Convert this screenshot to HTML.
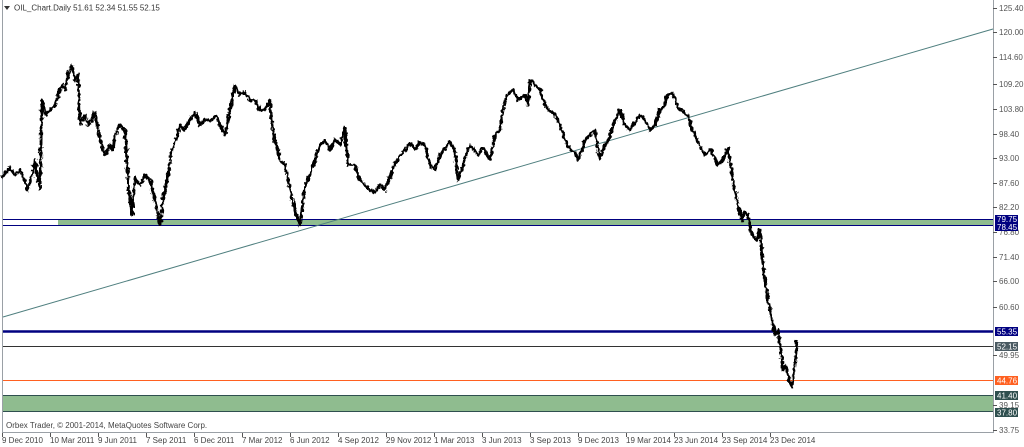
<!DOCTYPE html>
<html><head><meta charset="utf-8"><style>
html,body{margin:0;padding:0;background:#fff;}
svg{display:block;font-family:"Liberation Sans",sans-serif;}
</style></head><body>
<svg width="1024" height="447" viewBox="0 0 1024 447" xmlns="http://www.w3.org/2000/svg">
<defs>
<filter id="j" x="-5%" y="-5%" width="110%" height="110%">
<feTurbulence type="fractalNoise" baseFrequency="0.35 0.25" numOctaves="2" seed="3"/>
<feDisplacementMap in="SourceGraphic" scale="5" xChannelSelector="R" yChannelSelector="G"/>
</filter>
</defs>
<rect x="0" y="0" width="1024" height="447" fill="#fff"/>
<line x1="2.5" y1="0" x2="2.5" y2="433" stroke="#9aa0a6"/>
<line x1="993.5" y1="0" x2="993.5" y2="433" stroke="#9aa0a6"/>
<line x1="2" y1="432.5" x2="994" y2="432.5" stroke="#9aa0a6"/>
<rect x="58" y="219" width="935" height="7" fill="#8fbc8f"/>
<line x1="3" y1="219.5" x2="993" y2="219.5" stroke="#000080"/>
<line x1="3" y1="225.5" x2="993" y2="225.5" stroke="#000080"/>
<rect x="3" y="395" width="990" height="17" fill="#8fbc8f"/>
<line x1="3" y1="395.5" x2="993" y2="395.5" stroke="#2f4f4f"/>
<line x1="3" y1="411.5" x2="993" y2="411.5" stroke="#2f4f4f"/>
<line x1="3" y1="331.5" x2="993" y2="331.5" stroke="#000080" stroke-width="2.5"/>
<line x1="3" y1="346.5" x2="993" y2="346.5" stroke="#333"/>
<line x1="3" y1="380.5" x2="993" y2="380.5" stroke="#ff6020"/>
<line x1="3" y1="317" x2="993" y2="29" stroke="#4f7f7f" stroke-width="1"/>
<g filter="url(#j)">
<polyline fill="none" stroke="#000" stroke-width="2.8" stroke-linejoin="round" points="2,178 6,172 10,168 15,175 20,170 25,182 28,190 32,175 35,160 38,180 40,188 42,100 46,115 50,110 55,105 58,95 62,85 65,90 68,75 72,65 75,80 78,75 80,125 85,115 88,125 92,120 95,112 100,140 105,155 110,145 113,150 115,135 120,125 125,130 128,180 132,215 135,178 140,185 145,175 150,180 155,200 158,215 160,225 163,200 168,175 172,150 176,140 180,125 185,130 190,120 195,112 200,125 205,120 212,120 216,115 220,125 225,135 230,110 235,85 240,95 245,92 250,100 255,100 260,110 265,110 270,100 272,125 275,140 280,160 285,165 290,190 296,215 300,225 305,185 310,175 315,160 320,145 325,140 330,150 335,140 340,145 345,128 348,165 355,165 360,180 365,185 370,190 375,192 380,185 385,190 393,168 400,155 405,150 410,143 415,150 420,142 425,145 430,165 435,170 440,155 445,148 450,142 455,152 458,180 462,168 466,155 470,145 474,150 478,155 483,148 490,160 495,135 500,130 503,110 507,95 513,90 518,100 525,95 528,105 530,80 535,85 540,90 543,100 548,110 552,112 555,115 560,125 565,140 570,150 575,152 578,160 582,150 585,140 590,135 595,130 597,145 600,160 603,150 608,140 612,130 615,120 620,110 625,125 630,130 635,122 640,115 645,120 650,130 655,125 660,110 665,105 667,95 672,93 675,98 678,108 683,112 688,115 692,130 697,140 701,148 705,155 710,150 712,152 718,165 723,160 728,148 732,175 737,200 742,220 745,212 748,215 752,235 757,240 760,230 764,275 768,300 772,320 775,335 778,330 780,345 783,370 786,365 789,380 792,386 794,372 795,365 797,340"/>
</g>
<path d="M4 6 L10 6 L7 10 Z" fill="#333"/>
<text x="14" y="10.5" font-size="8" fill="#333">OIL_Chart.Daily  51.61 52.34 51.55 52.15</text>
<text x="6" y="428" font-size="8" fill="#444">Orbex Trader, © 2001-2014, MetaQuotes Software Corp.</text>
<g font-size="8" fill="#555">
<text x="999" y="11">125.40</text>
<text x="999" y="35">120.00</text>
<text x="999" y="60">114.60</text>
<text x="999" y="87">109.20</text>
<text x="999" y="112">103.80</text>
<text x="999" y="137">98.40</text>
<text x="999" y="161">93.00</text>
<text x="999" y="186">87.60</text>
<text x="999" y="210">82.20</text>
<text x="999" y="235">76.80</text>
<text x="999" y="260">71.40</text>
<text x="999" y="284">66.00</text>
<text x="999" y="310">60.60</text>
<text x="999" y="358">49.95</text>
<text x="999" y="408">39.15</text>
<text x="999" y="433">33.75</text>
</g>
<g stroke="#555">
<line x1="993" y1="8.5" x2="997" y2="8.5"/><line x1="993" y1="32.5" x2="997" y2="32.5"/><line x1="993" y1="57.5" x2="997" y2="57.5"/><line x1="993" y1="84.5" x2="997" y2="84.5"/><line x1="993" y1="109.5" x2="997" y2="109.5"/><line x1="993" y1="134.5" x2="997" y2="134.5"/><line x1="993" y1="158.5" x2="997" y2="158.5"/><line x1="993" y1="183.5" x2="997" y2="183.5"/><line x1="993" y1="207.5" x2="997" y2="207.5"/><line x1="993" y1="232.5" x2="997" y2="232.5"/><line x1="993" y1="257.5" x2="997" y2="257.5"/><line x1="993" y1="281.5" x2="997" y2="281.5"/><line x1="993" y1="307.5" x2="997" y2="307.5"/><line x1="993" y1="355.5" x2="997" y2="355.5"/><line x1="993" y1="405.5" x2="997" y2="405.5"/><line x1="993" y1="430.5" x2="997" y2="430.5"/>
</g>
<g font-size="8" fill="#fff">
<rect x="995" y="215" width="23" height="8" fill="#000080"/><text x="997" y="222">79.75</text>
<rect x="995" y="223" width="23" height="8" fill="#000080"/><text x="997" y="230">78.45</text>
<rect x="995" y="327" width="23" height="9" fill="#000080"/><text x="997" y="334.5">55.35</text>
<rect x="995" y="342" width="23" height="9" fill="#4a5a62"/><text x="997" y="349.5">52.15</text>
<rect x="995" y="376" width="23" height="9" fill="#ff6020"/><text x="997" y="383.5">44.76</text>
<rect x="995" y="391" width="23" height="9" fill="#2f4f4f"/><text x="997" y="398.5">41.40</text>
<rect x="995" y="408" width="23" height="9" fill="#2f4f4f"/><text x="997" y="415.5">37.80</text>
</g>
<g font-size="8" fill="#444">
<text x="2" y="443">9 Dec 2010</text>
<text x="50" y="443">10 Mar 2011</text>
<text x="98" y="443">9 Jun 2011</text>
<text x="146" y="443">7 Sep 2011</text>
<text x="194" y="443">6 Dec 2011</text>
<text x="242" y="443">7 Mar 2012</text>
<text x="290" y="443">6 Jun 2012</text>
<text x="338" y="443">4 Sep 2012</text>
<text x="386" y="443">29 Nov 2012</text>
<text x="434" y="443">1 Mar 2013</text>
<text x="482" y="443">3 Jun 2013</text>
<text x="530" y="443">3 Sep 2013</text>
<text x="578" y="443">9 Dec 2013</text>
<text x="626" y="443">19 Mar 2014</text>
<text x="674" y="443">23 Jun 2014</text>
<text x="722" y="443">23 Sep 2014</text>
<text x="770" y="443">23 Dec 2014</text>
</g>
<g stroke="#555">
<line x1="2.5" y1="433" x2="2.5" y2="437"/><line x1="50.5" y1="433" x2="50.5" y2="437"/><line x1="98.5" y1="433" x2="98.5" y2="437"/><line x1="146.5" y1="433" x2="146.5" y2="437"/><line x1="194.5" y1="433" x2="194.5" y2="437"/><line x1="242.5" y1="433" x2="242.5" y2="437"/><line x1="290.5" y1="433" x2="290.5" y2="437"/><line x1="338.5" y1="433" x2="338.5" y2="437"/><line x1="386.5" y1="433" x2="386.5" y2="437"/><line x1="434.5" y1="433" x2="434.5" y2="437"/><line x1="482.5" y1="433" x2="482.5" y2="437"/><line x1="530.5" y1="433" x2="530.5" y2="437"/><line x1="578.5" y1="433" x2="578.5" y2="437"/><line x1="626.5" y1="433" x2="626.5" y2="437"/><line x1="674.5" y1="433" x2="674.5" y2="437"/><line x1="722.5" y1="433" x2="722.5" y2="437"/><line x1="770.5" y1="433" x2="770.5" y2="437"/>
</g>
</svg>
</body></html>
